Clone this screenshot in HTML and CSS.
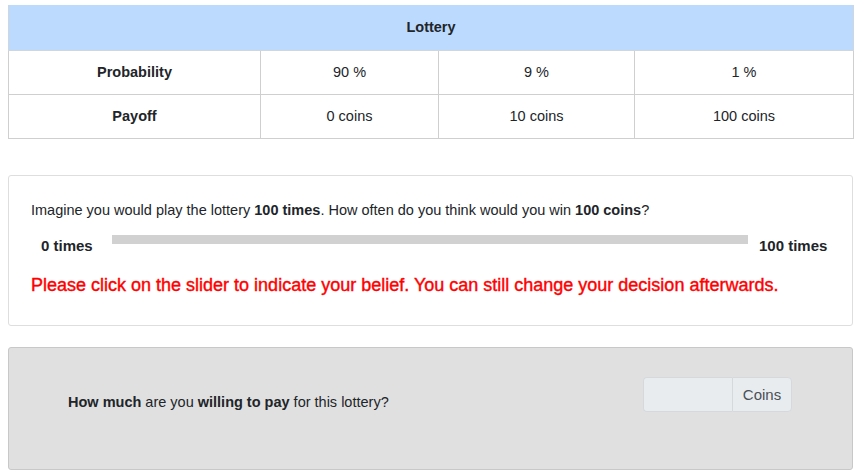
FILE: index.html
```html
<!DOCTYPE html>
<html>
<head>
<meta charset="utf-8">
<link rel="stylesheet" href="styles.css">
</head>
<body>
<div class="page">
  <table class="lottery">
    <colgroup>
      <col class="c1"><col class="c2"><col class="c3"><col class="c4">
    </colgroup>
    <thead>
      <tr><th colspan="4" class="head">Lottery</th></tr>
    </thead>
    <tbody>
      <tr><th>Probability</th><td>90 %</td><td>9 %</td><td>1 %</td></tr>
      <tr><th>Payoff</th><td>0 coins</td><td>10 coins</td><td>100 coins</td></tr>
    </tbody>
  </table>

  <div class="card belief">
    <p class="question">Imagine you would play the lottery <b>100 times</b>. How often do you think would you win <b>100 coins</b>?</p>
    <div class="slider-row">
      <span class="end left">0 times</span>
      <div class="track-wrap"><div class="track"></div></div>
      <span class="end right">100 times</span>
    </div>
    <p class="warn">Please click on the slider to indicate your belief. You can still change your decision afterwards.</p>
  </div>

  <div class="card wtp">
    <p class="ask"><b>How much</b> are you <b>willing to pay</b> for this lottery?</p>
    <div class="input-group">
      <div class="input"></div>
      <span class="addon">Coins</span>
    </div>
  </div>
</div>
</body>
</html>
```

FILE: styles.css
```css
* { box-sizing: border-box; }
html, body { margin: 0; padding: 0; background: #fff; }
body {
  font-family: "Liberation Sans", Arial, sans-serif;
  font-size: 14.5px;
  color: #212529;
}
.page {
  padding: 5px 8px 0 8px;
}
.lottery {
  width: 845px;
  border-collapse: collapse;
  table-layout: fixed;
  border-left: 1px solid #b4b4b4;
}
.c1 { width: 252px; }
.c2 { width: 178px; }
.c3 { width: 196px; }
.c4 { width: 219px; }
.lottery th, .lottery td {
  border: 1px solid #cfcfcf;
  height: 44px;
  text-align: center;
  vertical-align: middle;
  padding: 0;
  font-size: 14.5px;
}
.lottery th { font-weight: bold; }
.lottery td { font-weight: normal; }
.lottery .head {
  background: #bcdafe;
  border-top: none;
  border-color: #cfd6de;
  height: 45px;
}
.card {
  width: 845px;
  border: 1px solid #dedede;
  border-radius: 3px;
}
.belief {
  margin-top: 36px;
  height: 151px;
  padding: 25px 22px 0 22px;
}
.question {
  margin: 0;
  font-size: 14.5px;
  line-height: 18px;
}
.slider-row {
  display: flex;
  align-items: flex-start;
  margin-top: 15px;
  height: 26px;
}
.end {
  font-weight: bold;
  font-size: 15px;
  line-height: 18px;
  padding-top: 3px;
}
.left { margin-left: 10px; width: 71px; }
.track-wrap { width: 636px; }
.track {
  height: 9px;
  background: #d1d1d1;
  margin-top: 1px;
}
.right { margin-left: 11px; }
.warn {
  margin: 13px 0 0 0;
  color: #ff0000;
  font-size: 18px;
  line-height: 24px;
  -webkit-text-stroke: 0.4px #ff0000;
}
.wtp {
  margin-top: 21px;
  height: 123px;
  background: #e0e0e0;
  border-color: #c8c8c8;
  display: flex;
  align-items: flex-start;
  padding: 29px 60px 0 59px;
}
.ask {
  margin: 17px 0 0 0;
  line-height: 17px;
  flex: 1;
}
.input-group {
  display: flex;
  height: 35px;
}
.input {
  width: 89px;
  background: #e9ecef;
  border: 1px solid #d6d9dc;
  border-right: none;
  border-radius: 4px 0 0 4px;
}
.addon {
  width: 60px;
  background: #e9ecef;
  border: 1px solid #d6d9dc;
  border-radius: 0 4px 4px 0;
  color: #495057;
  font-size: 15px;
  display: flex;
  align-items: center;
  justify-content: center;
}
```
